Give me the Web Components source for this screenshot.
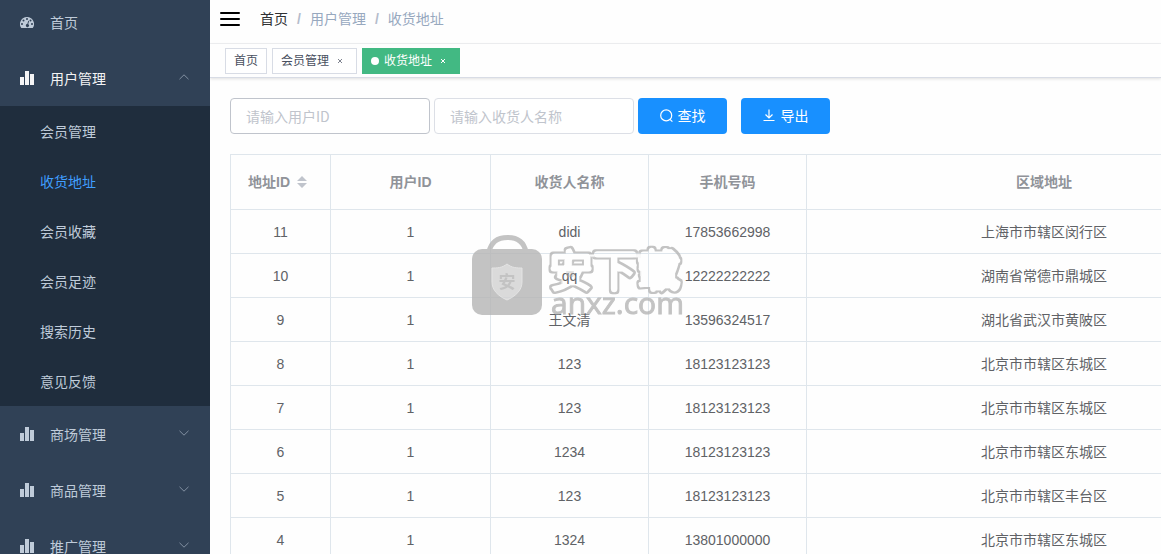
<!DOCTYPE html>
<html lang="zh-CN">
<head>
<meta charset="utf-8">
<title>收货地址</title>
<style>
html, body { height: 100%; }
body {
  margin: 0; overflow: hidden; background: #fefefe; color: #606266;
  font: 14px/20px "Liberation Sans", "Noto Sans CJK SC", sans-serif;
}
</style>
</head>
<body>
<app-shell>
  <app-sidebar slot="side">
    <side-item>首页</side-item>
    <side-group label="用户管理" open>
      <sub-item>会员管理</sub-item>
      <sub-item active>收货地址</sub-item>
      <sub-item>会员收藏</sub-item>
      <sub-item>会员足迹</sub-item>
      <sub-item>搜索历史</sub-item>
      <sub-item>意见反馈</sub-item>
    </side-group>
    <side-group label="商场管理"></side-group>
    <side-group label="商品管理"></side-group>
    <side-group label="推广管理"></side-group>
  </app-sidebar>
  <page-header></page-header>
  <tags-bar>
    <tag-link>首页</tag-link>
    <tag-link closable>会员管理</tag-link>
    <tag-link closable active>收货地址</tag-link>
  </tags-bar>
  <search-bar></search-bar>
  <address-table></address-table>
</app-shell>

<script>
const BARS = '<svg width="14" height="14" viewBox="0 0 14 14" aria-hidden="true"><path fill="currentColor" d="M0 6h4v8H0zM5 0h4v14H5zM10 3h4v11h-4z"/></svg>';
const GAUGE = '<svg width="14" height="14" viewBox="0 0 14 14" aria-hidden="true"><path fill="currentColor" fill-rule="evenodd" d="M7 1a7 7 0 0 0-5.900 10.800c.1.2.3.3.6.3h10.600c.3 0 .5-.1.6-.3A7 7 0 0 0 7 1zM7 2a1 1 0 1 1 0 2 1 1 0 0 1 0-2zM3.500 3.500a1 1 0 1 1 0 2 1 1 0 0 1 0-2zM2 7a1 1 0 1 1 0 2 1 1 0 0 1 0-2zM12 7a1 1 0 1 1 0 2 1 1 0 0 1 0-2zM10.500 3.500a1 1 0 1 1 0 2 1 1 0 0 1 0-2zM8.300 4.800l.8.2-.9 3.300a1.500 1.500 0 1 1-.9-.2z"/></svg>';

function define(name, render) {
  customElements.define(name, class extends HTMLElement {
    constructor() {
      super();
      this.attachShadow({ mode: 'open' });
    }
    connectedCallback() {
      this.shadowRoot.innerHTML = '<style>:host,*{box-sizing:border-box}</style>' + render(this);
    }
  });
}

define('app-shell', () => `
<style>
:host { display: grid; grid-template-columns: 210px minmax(0, 1fr); height: 100vh; overflow: hidden; }
main { min-width: 0; overflow: hidden; }
</style>
<slot name="side"></slot>
<main><slot></slot></main>`);

define('app-sidebar', () => `
<style>
:host { display: block; background: #304156; overflow: hidden; }
nav { display: flex; flex-direction: column; }
</style>
<nav aria-label="主菜单"><slot></slot></nav>`);

define('side-item', () => `
<style>
:host { display: block; }
a { display: flex; align-items: center; gap: 16px; height: 50px; padding: 0 20px 4px; color: #bfcbd9; text-decoration: none; }
svg { display: block; }
</style>
<a href="#">${GAUGE}<span><slot></slot></span></a>`);

define('side-group', el => {
  const open = el.hasAttribute('open');
  return `
<style>
:host { display: block; }
button { display: flex; align-items: center; gap: 16px; width: 100%; height: 56px; padding: 0 20px; border: 0; background: none; font: inherit; color: ${open ? '#f4f4f5' : '#bfcbd9'}; text-align: left; cursor: pointer; }
svg { display: block; }
span { flex: 1; padding-top: 2px; }
.arrow { color: #8290a2; margin-bottom: 2px; }
.sub { background: #1f2d3d; }
</style>
<button type="button" aria-expanded="${open}">${BARS}<span>${el.getAttribute('label')}</span>
<svg class="arrow" width="12" height="12" viewBox="0 0 12 12" aria-hidden="true"><path fill="none" stroke="currentColor" d="${open ? 'M1.500 8.200L6 3.800l4.500 4.400' : 'M1.500 3.800L6 8.200l4.500-4.400'}"/></svg></button>
<div class="sub"><slot></slot></div>`;
});

define('sub-item', el => `
<style>
:host { display: block; }
a { display: flex; align-items: center; height: 50px; padding: 2px 0 0 40px; text-decoration: none; color: ${el.hasAttribute('active') ? '#409eff' : '#bfcbd9'}; }
</style>
<a href="#"><slot></slot></a>`);

define('page-header', () => `
<style>
:host { display: flex; align-items: center; gap: 20px; height: 44px; padding: 0 10px 5px; border-bottom: 1px solid #f0f1f3; }
button { display: block; padding: 0; border: 0; background: none; color: #000; }
svg { display: block; }
ol { display: flex; list-style: none; margin: 0; padding: 0; }
a { color: #303133; text-decoration: none; }
li { color: #97a8be; }
li + li::before { content: "/"; margin: 0 9px; color: #b4bccc; font-weight: bold; }
</style>
<button type="button" aria-label="折叠菜单"><svg width="20" height="20" viewBox="0 0 20 20"><path stroke="currentColor" stroke-width="2" stroke-linecap="round" d="M1 4h18M1 10h18M1 16h18"/></svg></button>
<nav aria-label="面包屑"><ol><li><a href="#">首页</a></li><li>用户管理</li><li>收货地址</li></ol></nav>`);

define('tags-bar', () => `
<style>
:host { display: flex; align-items: center; gap: 5px; height: 34px; padding: 0 15px; border-bottom: 1px solid #d8dce5; box-shadow: 0 1px 3px rgba(0,0,0,.12); }
</style>
<slot></slot>`);

define('tag-link', el => {
  const active = el.hasAttribute('active');
  return `
<style>
:host { display: flex; align-items: center; height: 26px; padding: 0 8px; font-size: 12px; border: 1px solid ${active ? '#42b983' : '#d8dce5'}; background: ${active ? '#42b983' : '#fff'}; color: ${active ? '#fff' : '#495060'}; }
a { display: flex; align-items: center; gap: 5px; color: inherit; text-decoration: none; }
i { width: 8px; height: 8px; border-radius: 50%; background: #fff; }
button { display: grid; place-items: center; width: 16px; height: 16px; margin-left: 3px; padding: 0; border: 0; background: none; color: inherit; opacity: ${active ? 1 : .7}; }
</style>
<a href="#">${active ? '<i></i>' : ''}<slot></slot></a>${el.hasAttribute('closable') ? '<button type="button" aria-label="关闭"><svg width="6" height="6" viewBox="0 0 6 6"><path stroke="currentColor" d="M1 1l4 4M5 1L1 5"/></svg></button>' : ''}`;
});

define('search-bar', () => `
<style>
:host { display: block; padding: 20px; }
form { display: flex; gap: 4px; }
input { width: 200px; height: 36px; padding: 0 15px; border: 1px solid #dcdfe6; border-radius: 4px; background: #fff; font: 14px/20px "Noto Sans CJK SC", sans-serif; color: #606266; outline: 0; }
input:first-of-type { border-color: #c0c4cc; }
input::placeholder { color: #c0c4cc; opacity: 1; }
button { display: flex; align-items: center; justify-content: center; gap: 4px; width: 89px; height: 36px; padding: 0; border: 0; border-radius: 4px; background: #1890ff; color: #fff; font: inherit; }
button + button { margin-left: 10px; }
svg { display: block; }
</style>
<form onsubmit="return false">
<input type="text" aria-label="用户ID" placeholder="请输入用户ID">
<input type="text" aria-label="收货人名称" placeholder="请输入收货人名称">
<button type="submit"><svg width="14" height="14" viewBox="0 0 14 14" aria-hidden="true"><g fill="none" stroke="currentColor" stroke-width="1.200"><circle cx="6.200" cy="6.400" r="5.500"/><path d="M10 10.300l2.400 2.400"/></g></svg>查找</button>
<button type="button"><svg width="14" height="14" viewBox="0 0 14 14" aria-hidden="true"><path fill="none" stroke="currentColor" stroke-width="1.200" d="M6 .5v8.500M2.500 5.500L6 9l3.500-3.500M.5 11.500h11"/></svg>导出</button>
</form>`);

const ROWS = [
  [11, 1, 'didi', '17853662998', '上海市市辖区闵行区'],
  [10, 1, 'qq', '12222222222', '湖南省常德市鼎城区'],
  [9, 1, '王文清', '13596324517', '湖北省武汉市黄陂区'],
  [8, 1, '123', '18123123123', '北京市市辖区东城区'],
  [7, 1, '123', '18123123123', '北京市市辖区东城区'],
  [6, 1, '1234', '18123123123', '北京市市辖区东城区'],
  [5, 1, '123', '18123123123', '北京市市辖区丰台区'],
  [4, 1, '1324', '13801000000', '北京市市辖区东城区']
];

define('address-table', () => `
<style>
:host { display: block; position: relative; margin-left: 20px; overflow: hidden; }
table { width: 100%; min-width: 1052px; table-layout: fixed; border-collapse: separate; border-spacing: 0; border-top: 1px solid #dfe6ec; border-left: 1px solid #dfe6ec; }
.id { width: 100px; } .user { width: 160px; } .mid { width: 158px; }
th, td { padding: 0; height: 44px; text-align: center; border-right: 1px solid #dfe6ec; border-bottom: 1px solid #dfe6ec; }
th { height: 55px; color: #909399; font-weight: bold; }
th button { display: inline-flex; align-items: center; gap: 7px; padding: 0 6px 0 0; border: 0; background: none; font: inherit; color: inherit; vertical-align: top; }
svg { display: block; }
watermark-logo { position: absolute; left: 242px; top: 81px; }
</style>
<table>
<colgroup><col class="id"><col class="user"><col class="mid"><col class="mid"><col></colgroup>
<thead><tr><th scope="col"><button type="button">地址ID<svg width="10" height="12" viewBox="0 0 10 12" aria-hidden="true"><path fill="#c0c4cc" d="M0 5l5-5 5 5zM0 7h10l-5 5z"/></svg></button></th><th scope="col">用户ID</th><th scope="col">收货人名称</th><th scope="col">手机号码</th><th scope="col">区域地址</th></tr></thead>
<tbody>${ROWS.map(r => '<tr>' + r.map(c => `<td>${c}</td>`).join('') + '</tr>').join('')}</tbody>
</table>
<watermark-logo></watermark-logo>`);

define('watermark-logo', () => `
<style>
:host { display: block; pointer-events: none; }
svg { display: block; }
.cn { font: 44px/1 "Noto Sans CJK SC", sans-serif; }
.en { font: 30px/1 "Open Sans", sans-serif; }
.badge { font: bold 17px/1 "Noto Sans CJK SC", sans-serif; }
</style>
<svg width="220" height="86" viewBox="0 0 220 86">
<defs><filter id="outline" x="-5%" y="-10%" width="110%" height="120%"><feMorphology in="SourceAlpha" operator="erode" radius="2" result="inner"/><feComposite in="SourceGraphic" in2="inner" operator="out"/></filter></defs>
<g opacity=".8">
<path d="M17 17C19 7 26 2.500 35.500 2.500S52 7 54 17" fill="none" stroke="#b5b5b5" stroke-width="5"/>
<rect y="14" width="70" height="66" rx="10" fill="#b5b5b5"/>
<path d="M35 29c5 4 10 4 15 4v14c0 8-6 14-15 18-9-4-15-10-15-18V33c5 0 10 0 15-4z" fill="#d2d2d2" stroke="#dedede"/>
<text class="badge" x="35" y="53" text-anchor="middle" fill="#b5b5b5">安</text>
<text class="cn" x="77" y="52" fill="#b5b5b5" stroke="#b5b5b5" stroke-width="7" stroke-linejoin="round" filter="url(#outline)">安下载</text>
<text class="en" x="79" y="79" fill="#b5b5b5" stroke="#b5b5b5">anxz.com</text>
</g>
</svg>`);
</script>
</body>
</html>
